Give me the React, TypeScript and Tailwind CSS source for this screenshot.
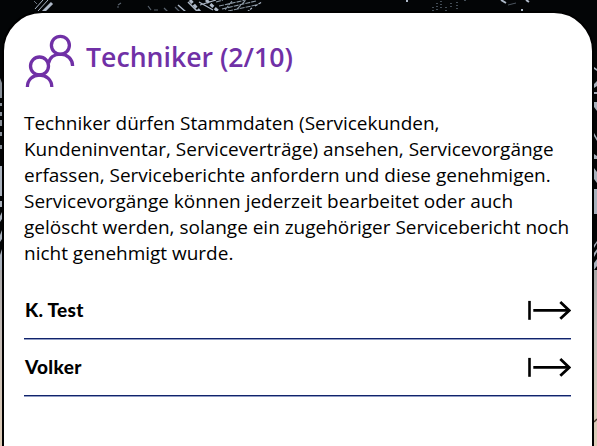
const TECHNICIANS = ["K. Test", "Volker"];

function UsersIcon() {
  return (
    <svg width="52" height="54" viewBox="24 34 52 54" fill="none" stroke="#7030a6" strokeWidth="3.3" className="shrink-0">
      <circle cx="60.4" cy="45.3" r="9" />
      <circle cx="39.5" cy="66" r="9" />
      <path d="M48.4 63.5C49.6 57.6 54.3 54.1 60.4 54.1C67.4 54.1 72.6 59.2 72.6 66" />
      <path d="M27.4 87C27.4 80 32.6 75 39.5 75S51.8 80 51.8 87" />
    </svg>
  );
}

function ArrowIcon() {
  return (
    <svg width="43" height="20" viewBox="0 0 43 20" fill="none" stroke="#000" className="-mt-0.5 shrink-0">
      <path d="M1.5 .9V19.8" strokeWidth="2.6" />
      <path d="M5.3 10.4H41" strokeWidth="2.7" />
      <path d="M32.3 2L41.2 10.4L32.3 18.8" strokeWidth="2.8" />
    </svg>
  );
}

/* Dark street scene behind the card, fading to warm paving at the bottom. */
function Backdrop() {
  return (
    <svg className="absolute inset-0" width="597" height="446" viewBox="0 0 597 446">
      <defs>
        <linearGradient id="ground" x1="0" y1="0" x2="0" y2="1">
          <stop offset="0" stopColor="#aaa8a8" />
          <stop offset=".35" stopColor="#c4bcb7" />
          <stop offset="1" stopColor="#dfcdb8" />
        </linearGradient>
      </defs>
      <rect width="597" height="446" fill="#030506" />
      <rect y="270" width="597" height="176" fill="url(#ground)" />
      <g stroke="#aeb9c8" fill="none">
        <path d="M35 9L43 0M38 11L48 0" strokeWidth="1" />
        <path d="M43 12L52 3" strokeWidth="3" />
        <path d="M34 1L37 4" stroke="#69737e" />
        <path d="M118 5L121 3M117 7H119M154 10H158M148 6L151 10M164 8L168 12M175 7L180 12" stroke="#59626d" strokeWidth="1.2" />
        <path d="M178 5L186 12M188 2L198 12" strokeWidth="1.5" />
        <path d="M190 0L200 12M206 0L219 12" strokeWidth="3" strokeDasharray="4 2" />
        <path d="M200 5L216 0M199 2L213 10" strokeWidth="1.2" />
        <path d="M216 2L223 0M219 6L246 0M222 9L256 1M228 11L256 5M232 1L225 10M245 1L237 9" strokeWidth="1.1" strokeDasharray="5 1" stroke="#8996a2" />
        <path d="M247 12L252 8M255 6L262 2" strokeWidth="1.2" strokeDasharray="3 1" />
        <path d="M407 0V2M501 0L506 3M526 0L529 2M522 9V11" strokeWidth="2" />
        <path d="M508 5L516 3" stroke="#4c555f" />
        <path d="M433 7V12M437 3V11M441 1V10M446 7V12M451 3V9M457 2V9M465 0V2" stroke="#667480" strokeWidth="1.3" strokeDasharray="1 2" />
      </g>
      <g fill="#aab2bd">
        <path d="M0 78L2 83V98H0ZM0 103H2V106H0ZM0 112H2V116H0ZM0 120H2V126H0ZM0 132H2V136H0ZM0 145H2V149H0Z" opacity=".8" />
        <rect y="166" width="2" height="30" />
        <path d="M0 201H2V207H0ZM0 216L2 212V219L0 222ZM0 235L2 230V239L0 242Z" />
        <path d="M0 255L2 249V270H0Z" />
        <path d="M594 67L597 69V71L594 69ZM594 84L597 81V86L594 88ZM594 92H597V94H594ZM594 102H597V111L594 107ZM594 133L597 138V141L594 136ZM594 154L597 156V159H594ZM594 168L597 172V183L594 179Z" />
        <rect x="594" y="189" width="3" height="25" />
        <path d="M594 245L597 241V243L594 248ZM594 253L597 249V252L594 257ZM594 263L597 259V266L594 270Z" />
      </g>
      <path d="M594 422L597 419" stroke="#49372d" strokeWidth="1.5" />
    </svg>
  );
}

export default function App() {
  return (
    <div className="relative h-[446px] w-[597px] overflow-hidden bg-black text-black">
      <Backdrop />
      <main className="relative ml-0.5 mt-[11px] h-[500px] w-[592px] rounded-[40px] border-2 border-black bg-white pl-5 pr-[21px] pt-[21px] font-['Open_Sans',sans-serif]">
        <header className="flex h-[54px] items-center gap-2.5">
          <UsersIcon />
          <h1 className="whitespace-nowrap pb-2 text-[26.65px] font-semibold leading-[36px] text-[#7030a6]">Techniker (2/10)</h1>
        </header>
        <p className="mt-[22px] whitespace-nowrap text-[18.98px] leading-[26px]">
          Techniker dürfen Stammdaten (Servicekunden,<br />
          Kundeninventar, Serviceverträge) ansehen, Servicevorgänge<br />
          erfassen, Serviceberichte anfordern und diese genehmigen.<br />
          Servicevorgänge können jederzeit bearbeitet oder auch<br />
          gelöscht werden, solange ein zugehöriger Servicebericht noch<br />
          nicht genehmigt wurde.
        </p>
        <ul className="mt-[17px]">
          {TECHNICIANS.map((name) => (
            <li key={name} className="flex h-[57px] flex-col">
              <div className="flex h-[55px] items-center justify-between">
                <span className="pl-px font-['Lato',sans-serif] text-[19px] font-black tracking-[0.3px]">{name}</span>
                <ArrowIcon />
              </div>
              <div className="h-px bg-[#10236b]" />
              <div className="h-px bg-[#929dc4]" />
            </li>
          ))}
        </ul>
      </main>
    </div>
  );
}
